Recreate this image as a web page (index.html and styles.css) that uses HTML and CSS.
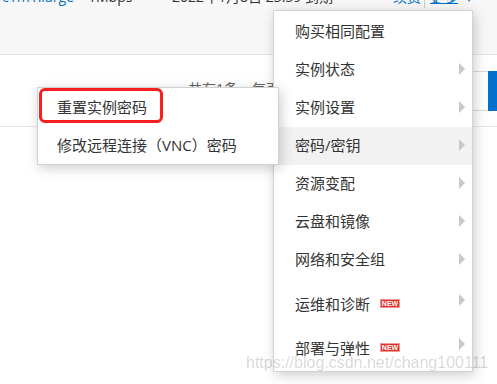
FILE: index.html
```html
<!DOCTYPE html>
<html lang="zh-CN">
<head>
  <meta charset="UTF-8" />
  <meta name="viewport" content="width=device-width, initial-scale=1.0"/>
  <title>实例列表 - 更多操作</title>
  <link rel="stylesheet" href="styles.css">
</head>
<body>
  <div class="page">
    <div class="topbar">
      <div class="spec-row">
        <span class="cell cell-spec link">c1m1.large</span>
        <span class="cell cell-bw">1Mbps</span>
        <span class="cell cell-date">2022年1月8日 23:59 到期</span>
        <span class="cell cell-ops">
          <span class="link">续费</span><span class="sep"></span><span class="link more">更多</span><span class="caret">▾</span>
        </span>
      </div>
    </div>

    <div class="toolbar">
      <span class="total">共有1条，每页显示</span>
      <span class="pager"></span>
      <span class="btn"></span>
    </div>
  </div>

  <div class="menu">
    <div class="menu-item">购买相同配置</div>
    <div class="menu-item">实例状态<i class="arrow"></i></div>
    <div class="menu-item">实例设置<i class="arrow"></i></div>
    <div class="menu-item active">密码/密钥<i class="arrow"></i></div>
    <div class="menu-item">资源变配<i class="arrow"></i></div>
    <div class="menu-item">云盘和镜像<i class="arrow"></i></div>
    <div class="menu-item">网络和安全组<i class="arrow"></i></div>
    <div class="menu-item tall"><span class="label">运维和诊断<span class="badge">NEW</span></span><i class="arrow"></i></div>
    <div class="menu-item tall"><span class="label">部署与弹性<span class="badge">NEW</span></span><i class="arrow"></i></div>
  </div>

  <div class="submenu">
    <div class="sub-item">重置实例密码<span class="mark"></span></div>
    <div class="sub-item">修改远程连接（VNC）密码</div>
  </div>

  <div class="watermark">https://blog.csdn.net/chang100111</div>
</body>
</html>
```

FILE: styles.css
```css
* {
  margin: 0;
  padding: 0;
  box-sizing: border-box;
}
body {
  font-family: "Open Sans", "Noto Sans CJK SC", sans-serif;
  background: #fff;
  color: #333;
  width: 497px;
  height: 384px;
  overflow: hidden;
  position: relative;
}
.topbar {
  height: 55px;
  background: #f7f7f7;
  border-bottom: 1px solid #e4e4e4;
  overflow: hidden;
}
.spec-row {
  display: flex;
  align-items: baseline;
  height: 20px;
  line-height: 20px;
  margin-top: -13px;
  font-size: 14px;
  white-space: nowrap;
}
.cell-spec {
  width: 88px;
  padding-left: 2px;
}
.cell-bw {
  width: 84px;
}
.cell-date {
  width: 221px;
}
.cell-ops {
  display: flex;
  align-items: baseline;
}
.link {
  color: #0070cc;
}
.more {
  text-decoration: underline;
}
.sep {
  display: inline-block;
  width: 1px;
  height: 12px;
  background: #ccc;
  margin: 0 5px 0 3px;
  align-self: flex-end;
}
.caret {
  color: #0070cc;
  font-size: 12px;
  margin-left: 8px;
}
.toolbar {
  display: flex;
  align-items: center;
  height: 72px;
  padding-left: 188px;
  border-bottom: 1px solid #e3e7ec;
}
.total {
  font-size: 14px;
  color: #666;
  white-space: nowrap;
  padding-bottom: 6px;
}
.pager {
  margin-left: auto;
  width: 120px;
  height: 40px;
  border-top: 1px solid #d9d9d9;
  border-bottom: 1px solid #d9d9d9;
}
.btn {
  width: 60px;
  height: 40px;
  margin-right: -51px;
  background: #0070cc;
}
.menu {
  position: absolute;
  left: 273px;
  top: 10px;
  width: 200px;
  padding: 2px 0 4px;
  background: #fff;
  border: 1px solid #d2d2d2;
  box-shadow: 2px 3px 12px rgba(0, 0, 0, 0.2);
  z-index: 1;
}
.menu-item {
  display: flex;
  align-items: center;
  height: 38px;
  padding: 0 7px 3px 21px;
  font-size: 15px;
  white-space: nowrap;
}
.menu-item.tall {
  height: 44px;
}
.menu-item.active {
  background: #f2f2f2;
}
.label {
  display: flex;
  align-items: center;
  padding-top: 8px;
}
.arrow {
  margin-left: auto;
  width: 0;
  height: 0;
  border-left: 6px solid #c8c8c8;
  border-top: 6px solid transparent;
  border-bottom: 6px solid transparent;
}
.badge {
  display: inline-flex;
  align-items: center;
  justify-content: center;
  width: 20px;
  height: 9px;
  margin-left: 10px;
  background: #e2302a;
  border: 1px solid #f29a96;
  color: #fff;
  font-family: "Liberation Sans", sans-serif;
  font-size: 7px;
  font-weight: bold;
  line-height: 1;
}
.submenu {
  position: absolute;
  left: 37px;
  top: 87px;
  width: 242px;
  background: #fff;
  border: 1px solid #d2d2d2;
  box-shadow: 2px 3px 12px rgba(0, 0, 0, 0.2);
  z-index: 2;
}
.sub-item {
  position: relative;
  display: flex;
  align-items: center;
  height: 38px;
  padding: 0 0 2px 19px;
  font-size: 15px;
  white-space: nowrap;
}
.mark {
  position: absolute;
  left: 1px;
  top: 0;
  width: 124px;
  height: 35px;
  border: 3px solid #fa1e1e;
  border-radius: 6px;
}
.watermark {
  position: absolute;
  left: 246px;
  top: 355px;
  font-family: "Liberation Sans", sans-serif;
  font-size: 16px;
  line-height: 16px;
  color: rgba(0, 0, 0, 0.17);
  white-space: nowrap;
  z-index: 3;
}
```
